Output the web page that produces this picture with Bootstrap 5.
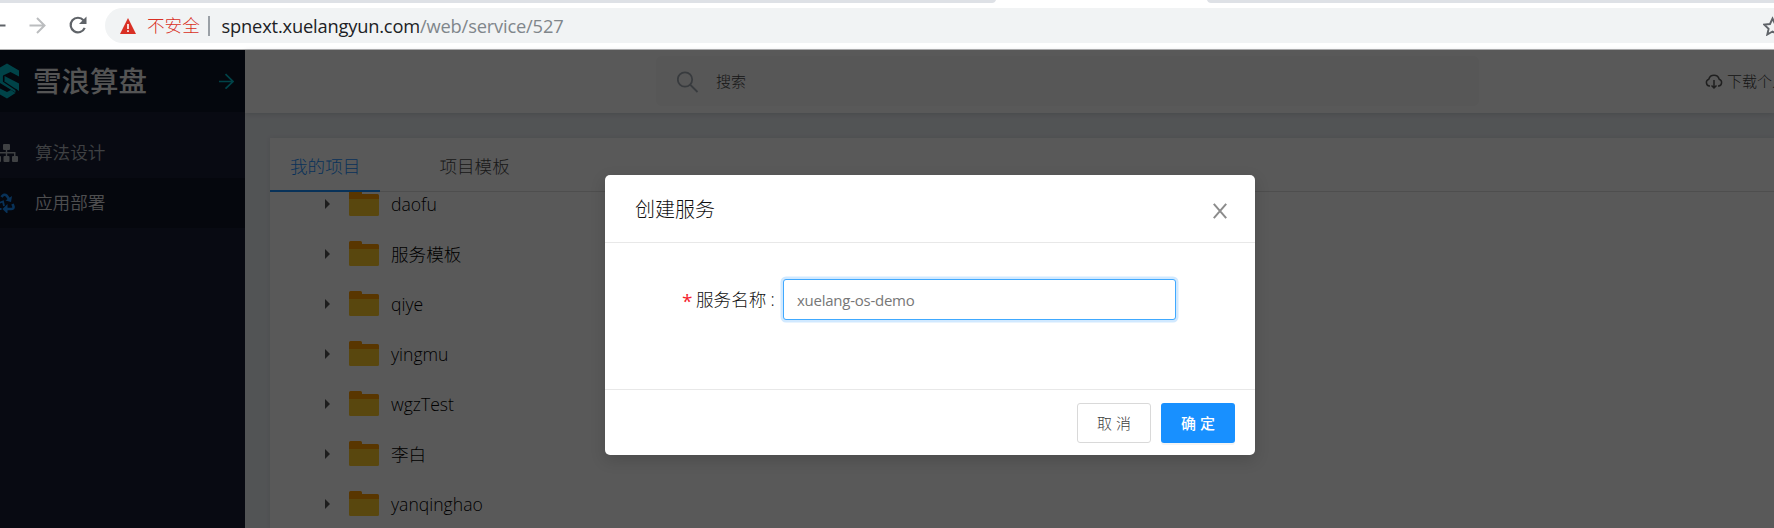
<!DOCTYPE html>
<html lang="zh-CN">
<head>
<meta charset="utf-8">
<meta name="viewport" content="width=device-width, initial-scale=1">
<title>雪浪算盘</title>
<link href="https://cdn.jsdelivr.net/npm/bootstrap@5.3.0/dist/css/bootstrap.min.css" rel="stylesheet">
<style>
  html, body { height: 100%; overflow: hidden; }
  body { font-family: "Open Sans", "Noto Sans CJK SC", sans-serif; font-size: 17.6px; font-weight: 300; line-height: 1.5; color: #262626; }
  svg { display: block; flex: none; }
  .fill { min-width: 0; min-height: 0; }

  /* browser chrome */
  .chrome-bar { height: 50px; background: #fff; border-bottom: 1px solid #b1b1b1; }
  .tab-strip { height: 3px; }
  .omnibox { height: 35px; margin: 5px 0 0 105px; border-radius: 18px 0 0 18px; background: #f1f3f4; padding-left: 15px; }
  .nav-icons { left: 0; top: 11px; }
  .insecure { color: #d93025; margin-left: 11px; width: 53px; }
  .divider { width: 1.5px; height: 20px; background: #9aa0a6; margin: 0 12px 0 8px; }
  .url { color: #202124; font-size: 18.3px; font-weight: 400; letter-spacing: -.18px; }
  .url span { color: #80868b; }

  /* sidebar */
  .side { width: 245px; background: #181f34; }
  .brand { height: 62px; background: #0c1427; padding-right: 11px; }
  .brand-name { font-size: 28.5px; font-weight: 500; color: #f0f0f0; margin-left: 13px; line-height: 1; padding-top: 1px; }
  .side-item { height: 50px; color: #b4bac0; font-weight: 350; }
  .side-item svg { margin-right: 15px; }
  .side-item span { margin-top: -2px; }
  .side-item.current { background: #0f1526; color: #dfdfe2; }

  /* page */
  .page { background: #ebeff3; }
  .top { height: 63px; background: #fff; box-shadow: 0 1px 5px rgba(0,21,41,.14); }
  .search { width: 823px; height: 50px; margin: 6px 0 0 411px; border-radius: 6px; background: #f8f8f8; padding-left: 21px; font-size: 15px; color: #404040; }
  .search span { margin-left: 17px; }
  .search svg { margin-top: 2px; }
  .download { margin-left: 226px; font-size: 15px; color: #404040; }
  .download span { margin-left: 4px; }
  .panel { margin: 25px 0 0 25px; background: #fff; box-shadow: 0 0 5px rgba(0,21,41,.08); }
  .tabs { height: 54px; border-bottom: 1px solid #e0e0e0; }
  .tabs a { height: 54px; padding: 0 20px; margin-right: 39px; color: #484848; text-decoration: none; line-height: 57px; }
  .tabs a.on { color: #1890ff; border-bottom: 2px solid #1890ff; }
  .tree { overflow: hidden; }
  .tree ul { margin: -13px 0 0; }
  .tree li { height: 50px; padding-left: 55px; color: #000; }
  .tree .folder { margin: -2px 12px 0 19px; }

  /* dialog */
  .shade { inset: 0; background: rgba(0,0,0,.65); }
  .dialog { width: 650px; height: 280px; left: 605px; top: 125px; border-radius: 5px; background: #fff; box-shadow: 0 5px 15px rgba(0,0,0,.15); }
  .dialog-head { height: 68px; border-bottom: 1px solid #e8e8e8; padding: 3px 28px 0 30px; font-size: 20px; color: #111; }
  .dialog-head svg { margin-top: 2px; }
  .dialog-main { height: 146px; padding: 36px 79px 0 77px; }
  .dialog-foot { height: 66px; border-top: 1px solid #e8e8e8; padding-right: 20px; gap: 10px; }
  .dialog-main label { height: 40px; color: #111; }
  .req { color: #f5222d; width: 14px; font-size: 19px; font-weight: 400; line-height: 1; padding-top: 5px; }
  .field-label { width: 87px; white-space: nowrap; }
  .form-control.name-box { width: 394px; height: 41px; border: 1px solid #40a9ff; border-radius: 3px; box-shadow: 0 0 0 2.5px rgba(24,144,255,.2); padding: 0 13px; font-size: 15px; font-weight: 400; color: #777; letter-spacing: -.25px; }
  .dialog-foot .btn { width: 74px; height: 40px; padding: 1px 0 0; border-radius: 3px; font-size: 15px; }
  .dialog-foot .btn-cancel { border: 1px solid #d9d9d9; color: #404040; background: #fff; font-weight: 300; }
  .btn-ok { background: #1890ff; color: #fff; font-weight: 500; box-shadow: 0 2px 0 rgba(0,0,0,.045); }
</style>
</head>
<body class="d-flex flex-column">

<svg width="0" height="0" class="position-absolute">
  <symbol id="folder" viewBox="0 0 30 25">
    <path d="M0 1.5Q0 0 1.5 0H11.5Q13 0 13 1.5V3H28.500Q30 3 30 4.500V10H0z" fill="#ff9c00"/>
    <path d="M0 8H30V23.500Q30 25 28.500 25H1.500Q0 25 0 23.500z" fill="#ffca28"/>
  </symbol>
  <symbol id="caret" viewBox="0 0 5 10"><path d="M0 0L5 5L0 10z" fill="#555"/></symbol>
</svg>

<header class="chrome-bar flex-shrink-0 position-relative">
  <svg class="tab-strip" width="1774" height="3"><path d="M0 0H996Q995 3 992 3H0zM1207 0H1774V3H1211Q1208 3 1207 0z" fill="#dee1e6"/></svg>
  <svg class="nav-icons position-absolute" width="92" height="30" fill="none" stroke-width="2">
    <path d="M0 14.500H5.500" stroke="#5f6368"/>
    <path d="M29.500 14.500H44M37 7L44.500 14.500L37 22" stroke="#bbbdbf"/>
    <path d="M83.500 9.300A7.300 7.300 0 1 0 84.700 16.800" stroke="#5f6368" stroke-width="2.200"/>
    <path d="M86.500 5.500V13H79z" fill="#5f6368"/>
  </svg>
  <div class="omnibox d-flex align-items-center">
    <svg width="16" height="16"><path d="M8 0L16 16H0z" fill="#d93025"/><path d="M8 6V11M8 12.200V14" stroke="#fff" stroke-width="1.600"/></svg>
    <span class="insecure text-nowrap">不安全</span>
    <span class="divider"></span>
    <span class="url">spnext.xuelangyun.com<span>/web/service/527</span></span>
    <svg class="ms-auto" width="11" height="20" viewBox="0 0 11 20" fill="none"><path d="M9.500 2.500L12 8L18 8.600L13.500 12.700L14.800 18.500L9.500 15.500L4.300 18.500L5.600 12.700L1.200 8.600L7 8z" stroke="#5f6368" stroke-width="1.900"/></svg>
  </div>
</header>

<div class="d-flex flex-grow-1 fill position-relative">
  <aside class="side flex-shrink-0">
    <div class="brand d-flex align-items-center">
      <svg width="20" height="36" viewBox="0 0 20 36" fill="#00c1cf">
        <path d="M7 .5L19 7.500V13.500L10.500 9L3 12.500V17L15.500 25V29.500L0 20V4.500z"/>
        <path d="M4.500 13L19 20.500V28L4.500 18.500z"/>
        <path d="M0 25.500L7 29L11 27L15.500 30L7 35.500L0 31.500z"/>
        <path d="M3.500 13V18.500L17 27.500" fill="none" stroke="#0c1427" stroke-width="1.200"/>
      </svg>
      <span class="brand-name">雪浪算盘</span>
      <svg class="ms-auto" width="15" height="16" fill="none" stroke="#00c1cf" stroke-width="1.700"><path d="M0 8.500H14M6.500 1.200L14 8.500L6.500 15.700"/></svg>
    </div>
    <nav class="pt-3 mt-n1">
      <div class="side-item d-flex align-items-center">
        <svg width="20" height="19" fill="#b4bac0"><rect x="3" y="0" width="7" height="6" rx="1"/><path d="M5.800 5H7.200V8H15.500V13H14V9.500H7.200V13H5.800V9.500H0V8H5.800z"/><rect x="-5" y="12" width="6" height="6" rx="1"/><rect x="3.500" y="12" width="6" height="6" rx="1"/><rect x="12" y="12" width="6" height="6" rx="1"/></svg>
        <span>算法设计</span>
      </div>
      <div class="side-item current d-flex align-items-center">
        <svg width="20" height="20" fill="none" stroke="#1890ff" stroke-width="2.600"><path d="M1.500 4Q4 .3 6.800 2.800L9 6"/><path d="M12 3L11 9L5.500 7.500z" fill="#1890ff" stroke="none"/><path d="M12.500 11L13.500 13.500Q14 16 11 16H6"/><path d="M7.500 11V21L2.500 16z" fill="#1890ff" stroke="none"/><path d="M-1 10L3 8.500L4 13M0 16H1.500" stroke-width="1.800"/></svg>
        <span>应用部署</span>
      </div>
    </nav>
  </aside>

  <div class="page d-flex flex-column flex-grow-1 fill">
    <div class="top d-flex flex-shrink-0 overflow-visible">
      <div class="search d-flex align-items-center flex-shrink-0">
        <svg width="22" height="22" fill="none" stroke="#a0a8b2" stroke-width="1.800"><circle cx="8" cy="8.500" r="7.200"/><path d="M13 13.500L20.500 21"/></svg>
        <span>搜索</span>
      </div>
      <div class="download d-flex align-items-center text-nowrap">
        <svg width="18" height="16" fill="none" stroke="#595959" stroke-width="1.500"><path d="M5 12H4.500A3.500 3.500 0 0 1 3.800 5.200A5.400 5.400 0 0 1 14.200 5.200A3.500 3.500 0 0 1 13.500 12H13M9 6V13.500M6.500 11.500L9 14L11.500 11.500"/></svg>
        <span>下载个人</span>
      </div>
    </div>
    <main class="panel d-flex flex-column flex-grow-1 fill">
      <nav class="tabs d-flex flex-shrink-0">
        <a class="on" href="#">我的项目</a>
        <a href="#">项目模板</a>
      </nav>
      <div class="tree flex-grow-1 fill">
        <ul class="list-unstyled">
          <li class="d-flex align-items-center"><svg width="5" height="10"><use href="#caret"/></svg><svg class="folder" width="30" height="25"><use href="#folder"/></svg>daofu</li>
          <li class="d-flex align-items-center"><svg width="5" height="10"><use href="#caret"/></svg><svg class="folder" width="30" height="25"><use href="#folder"/></svg>服务模板</li>
          <li class="d-flex align-items-center"><svg width="5" height="10"><use href="#caret"/></svg><svg class="folder" width="30" height="25"><use href="#folder"/></svg>qiye</li>
          <li class="d-flex align-items-center"><svg width="5" height="10"><use href="#caret"/></svg><svg class="folder" width="30" height="25"><use href="#folder"/></svg>yingmu</li>
          <li class="d-flex align-items-center"><svg width="5" height="10"><use href="#caret"/></svg><svg class="folder" width="30" height="25"><use href="#folder"/></svg>wgzTest</li>
          <li class="d-flex align-items-center"><svg width="5" height="10"><use href="#caret"/></svg><svg class="folder" width="30" height="25"><use href="#folder"/></svg>李白</li>
          <li class="d-flex align-items-center"><svg width="5" height="10"><use href="#caret"/></svg><svg class="folder" width="30" height="25"><use href="#folder"/></svg>yanqinghao</li>
        </ul>
      </div>
    </main>
  </div>

  <div class="shade position-absolute"></div>
  <section class="dialog position-absolute" role="dialog" aria-label="创建服务">
    <div class="dialog-head d-flex align-items-center justify-content-between">
      <span>创建服务</span>
      <svg width="14" height="16" fill="none" stroke="#8c8c8c" stroke-width="2"><path d="M.8 .8L13.200 15.200M13.200 .8L.8 15.200"/></svg>
    </div>
    <form class="dialog-main d-flex align-items-start">
      <label class="d-flex align-items-center" for="svc"><span class="req">*</span><span class="field-label">服务名称<span class="ps-1">:</span></span></label>
      <input id="svc" class="form-control name-box" value="xuelang-os-demo">
    </form>
    <div class="dialog-foot d-flex align-items-center justify-content-end">
      <button class="btn btn-cancel">取 消</button>
      <button class="btn btn-ok">确 定</button>
    </div>
  </section>
</div>

<script src="https://cdn.jsdelivr.net/npm/bootstrap@5.3.0/dist/js/bootstrap.bundle.min.js"></script>
</body>
</html>
